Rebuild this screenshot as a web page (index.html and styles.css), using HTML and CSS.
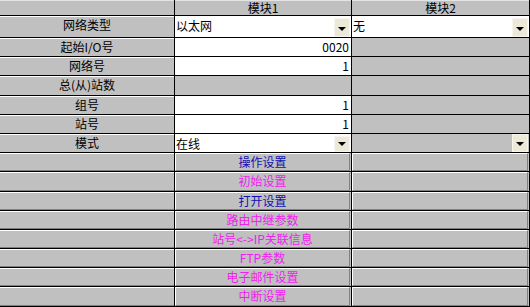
FILE: index.html
```html
<!DOCTYPE html>
<html lang="zh-CN">
<head>
  <meta charset="UTF-8">
  <title>网络参数</title>
  <link rel="stylesheet" href="styles.css">
</head>
<body>

  <div class="grid">
    <!-- header -->
    <div class="head"></div>
    <div class="head">模块1</div>
    <div class="head">模块2</div>

    <div class="label">网络类型</div>
    <div class="combo"><span>以太网</span><span class="drop"></span></div>
    <div class="combo"><span>无</span><span class="drop"></span></div>

    <div class="label">起始I/O号</div>
    <div class="num">0020</div>
    <div class="off"></div>

    <div class="label">网络号</div>
    <div class="num">1</div>
    <div class="off"></div>

    <div class="label">总(从)站数</div>
    <div class="off"></div>
    <div class="off"></div>

    <div class="label">组号</div>
    <div class="num">1</div>
    <div class="off"></div>

    <div class="label">站号</div>
    <div class="num">1</div>
    <div class="off"></div>

    <div class="label">模式</div>
    <div class="combo"><span>在线</span><span class="drop"></span></div>
    <div class="combo off"><span></span><span class="drop"></span></div>

    <!-- setting buttons -->
    <div class="label raised"></div>
    <div class="cell"><div class="btn blue">操作设置</div></div>
    <div class="cell"><div class="btn"></div></div>

    <div class="label raised"></div>
    <div class="cell"><div class="btn pink">初始设置</div></div>
    <div class="cell"><div class="btn"></div></div>

    <div class="label raised"></div>
    <div class="cell"><div class="btn blue">打开设置</div></div>
    <div class="cell"><div class="btn"></div></div>

    <div class="label raised"></div>
    <div class="cell"><div class="btn pink">路由中继参数</div></div>
    <div class="cell"><div class="btn"></div></div>

    <div class="label raised"></div>
    <div class="cell"><div class="btn pink">站号&lt;-&gt;IP关联信息</div></div>
    <div class="cell"><div class="btn"></div></div>

    <div class="label raised"></div>
    <div class="cell"><div class="btn pink">FTP参数</div></div>
    <div class="cell"><div class="btn"></div></div>

    <div class="label raised"></div>
    <div class="cell"><div class="btn pink">电子邮件设置</div></div>
    <div class="cell"><div class="btn"></div></div>

    <div class="label raised"></div>
    <div class="cell"><div class="btn pink">中断设置</div></div>
    <div class="cell"><div class="btn"></div></div>
  </div>

</body>
</html>
```

FILE: styles.css
```css
/* RESET & BASE */
* {
  margin: 0;
  padding: 0;
  box-sizing: border-box;
}
body {
  width: 530px;
  height: 307px;
  overflow: hidden;
  background: #000;
  font-family: "Noto Sans CJK SC", "DejaVu Sans", sans-serif;
  font-size: 12px;
  color: #000;
}

/* GRID */
.grid {
  display: grid;
  grid-template-columns: 174px 176px 177px;
  grid-template-rows: 15px 21px repeat(14, 18.2px);
  gap: 1px;
  padding-right: 1px;
  background: #000;
  width: 530px;
}
.grid > div {
  background: #c0c0c0;
  line-height: 16px;
  white-space: nowrap;
  overflow: hidden;
}

/* FIXED CELLS */
.head {
  text-align: center;
  line-height: 15px !important;
  box-shadow: inset 0 1px #e4e4e4;
}
.label {
  text-align: center;
  padding-top: 1px;
  box-shadow: inset 0 1px #fff;
}
.label.raised {
  box-shadow: inset 0 1px #fff, inset 0 -1px #808080;
}

/* EDIT CELLS */
.grid > .num {
  background: #fff;
  text-align: right;
  padding: 1px 2px 0 0;
}
.grid > .combo {
  background: #fff;
  display: flex;
  justify-content: space-between;
  padding-left: 1px;
}
.grid > .combo.off {
  background: #c0c0c0;
}
.combo span:first-child {
  padding-top: 2px;
}
.drop {
  display: block;
  width: 16px;
  flex: none;
  margin-top: 2px;
  margin-right: 1px;
  background: #ece9d8;
  border: 1px solid #f7f5ee;
  position: relative;
}
.combo.off .drop {
  margin-top: 0;
}
.drop::after {
  content: "";
  position: absolute;
  left: 3px;
  bottom: 5px;
  border-left: 4px solid transparent;
  border-right: 4px solid transparent;
  border-top: 4px solid #000;
}

/* BUTTON CELLS */
.cell {
  display: flex;
}
.btn {
  flex: 1;
  text-align: center;
  line-height: 15px;
  border: 1px solid;
  border-color: #fff #808080 #808080 #fff;
  margin-right: 1px;
}
.blue { color: #1010b0; }
.pink { color: #f020f0; }
```
